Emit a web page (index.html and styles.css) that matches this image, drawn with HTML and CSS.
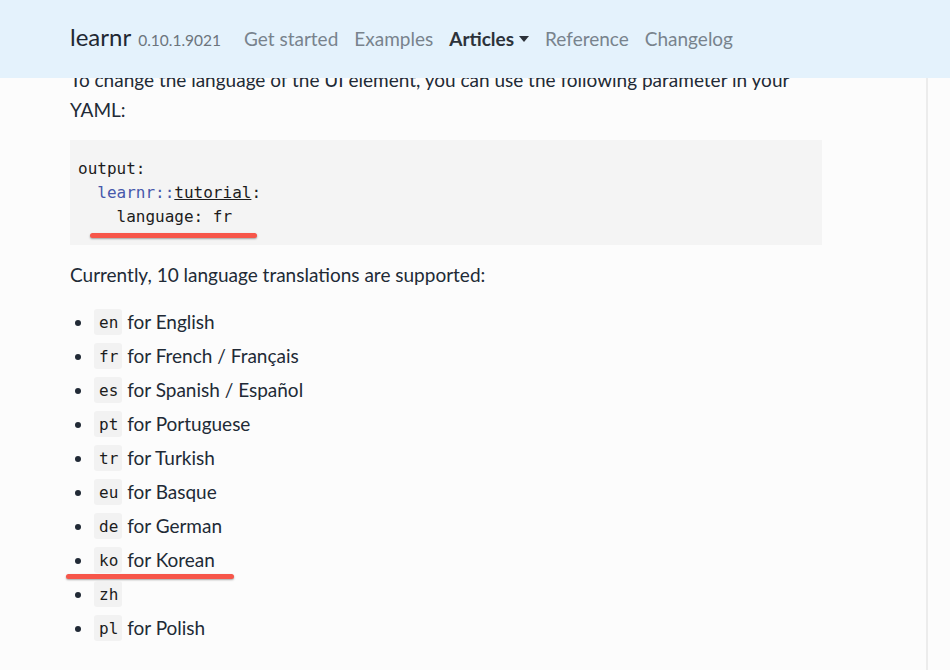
FILE: index.html
```html
<!DOCTYPE html>
<html lang="en">
<head>
<meta charset="utf-8">
<title>learnr – Articles</title>
<link rel="stylesheet" href="styles.css">
</head>
<body>
<nav class="navbar">
  <a class="brand" href="#">learnr</a>
  <span class="version">0.10.1.9021</span>
  <ul class="nav-links">
    <li><a href="#">Get started</a></li>
    <li><a href="#">Examples</a></li>
    <li><a href="#" class="active">Articles<span class="caret"></span></a></li>
    <li><a href="#">Reference</a></li>
    <li><a href="#">Changelog</a></li>
  </ul>
</nav>
<div class="page">
  <main class="content">
    <p>To change the language of the UI element, you can use the following parameter in your YAML:</p>
    <pre class="code-block"><code>output:
  <span class="ns">learnr::</span><span class="fn">tutorial</span>:
    language: fr</code><span class="mark mark-code"></span></pre>
    <p>Currently, 10 language translations are supported:</p>
    <ul class="langs">
      <li><code>en</code> for English</li>
      <li><code>fr</code> for French / Français</li>
      <li><code>es</code> for Spanish / Español</li>
      <li><code>pt</code> for Portuguese</li>
      <li><code>tr</code> for Turkish</li>
      <li><code>eu</code> for Basque</li>
      <li><code>de</code> for German</li>
      <li class="marked"><code>ko</code> for Korean<span class="mark mark-list"></span></li>
      <li><code>zh</code></li>
      <li><code>pl</code> for Polish</li>
    </ul>
  </main>
  <aside class="sidebar"></aside>
</div>
</body>
</html>
```
FILE: styles.css
```css
html, body {
  margin: 0;
  padding: 0;
}
body {
  background: #fcfcfc;
  color: #212a36;
  font-family: Lato, "Liberation Sans", sans-serif;
  font-size: 19px;
  line-height: 30px;
  height: 670px;
  overflow: hidden;
}
.navbar {
  position: fixed;
  top: 0;
  left: 0;
  right: 0;
  height: 78px;
  background: #e4f2fc;
  display: flex;
  align-items: baseline;
  padding: 0 0 0 70px;
  box-sizing: border-box;
  z-index: 10;
  line-height: 74px;
}
.brand {
  font-size: 24px;
  color: #1f2833;
  text-decoration: none;
}
.version {
  font-size: 15.5px;
  color: #6c757d;
  margin-left: 7px;
}
.nav-links {
  list-style: none;
  display: flex;
  gap: 16px;
  margin: 0 0 0 23px;
  padding: 0;
}
.nav-links a {
  color: #78838d;
  text-decoration: none;
  font-size: 19px;
}
.nav-links a.active {
  color: #2c323a;
  font-weight: bold;
}
.caret {
  display: inline-block;
  margin-left: 5px;
  vertical-align: 4px;
  border-left: 5px solid transparent;
  border-right: 5px solid transparent;
  border-top: 6px solid #2c323a;
}
.page {
  display: flex;
  height: 670px;
}
.content {
  width: 752px;
  margin-left: 70px;
  padding-top: 65px;
}
.sidebar {
  margin-left: 104px;
  border-left: 2px solid #ececec;
  flex: 1;
}
p {
  margin: 0 0 15px;
}
.code-block {
  position: relative;
  margin: 0 0 15px;
  background: #f4f4f4;
  padding: 17px 8px 16px;
  font-family: "DejaVu Sans Mono", "Liberation Mono", monospace;
  font-size: 16px;
  line-height: 24px;
  color: #1c1c1c;
}
.ns {
  color: #4758ab;
}
.fn {
  text-decoration: underline;
}
.mark {
  position: absolute;
  height: 5px;
  border-radius: 3px;
  background: #f7564a;
  box-shadow: 0 1px 2px rgba(0, 0, 0, 0.35);
}
.mark-code {
  left: 20px;
  top: 93px;
  width: 167px;
}
.langs {
  margin: 0;
  padding-left: 24px;
}
.langs li {
  height: 34px;
  line-height: 34px;
  position: relative;
}
.langs code {
  display: inline-block;
  vertical-align: top;
  margin-top: 4px;
  height: 26px;
  line-height: 27px;
  font-family: "DejaVu Sans Mono", "Liberation Mono", monospace;
  font-size: 16px;
  background: #f2f2f2;
  border-radius: 3px;
  padding: 0 4px 0 5px;
  color: #1c1c1c;
}
.mark-list {
  left: -28px;
  top: 31px;
  width: 168px;
}
```
